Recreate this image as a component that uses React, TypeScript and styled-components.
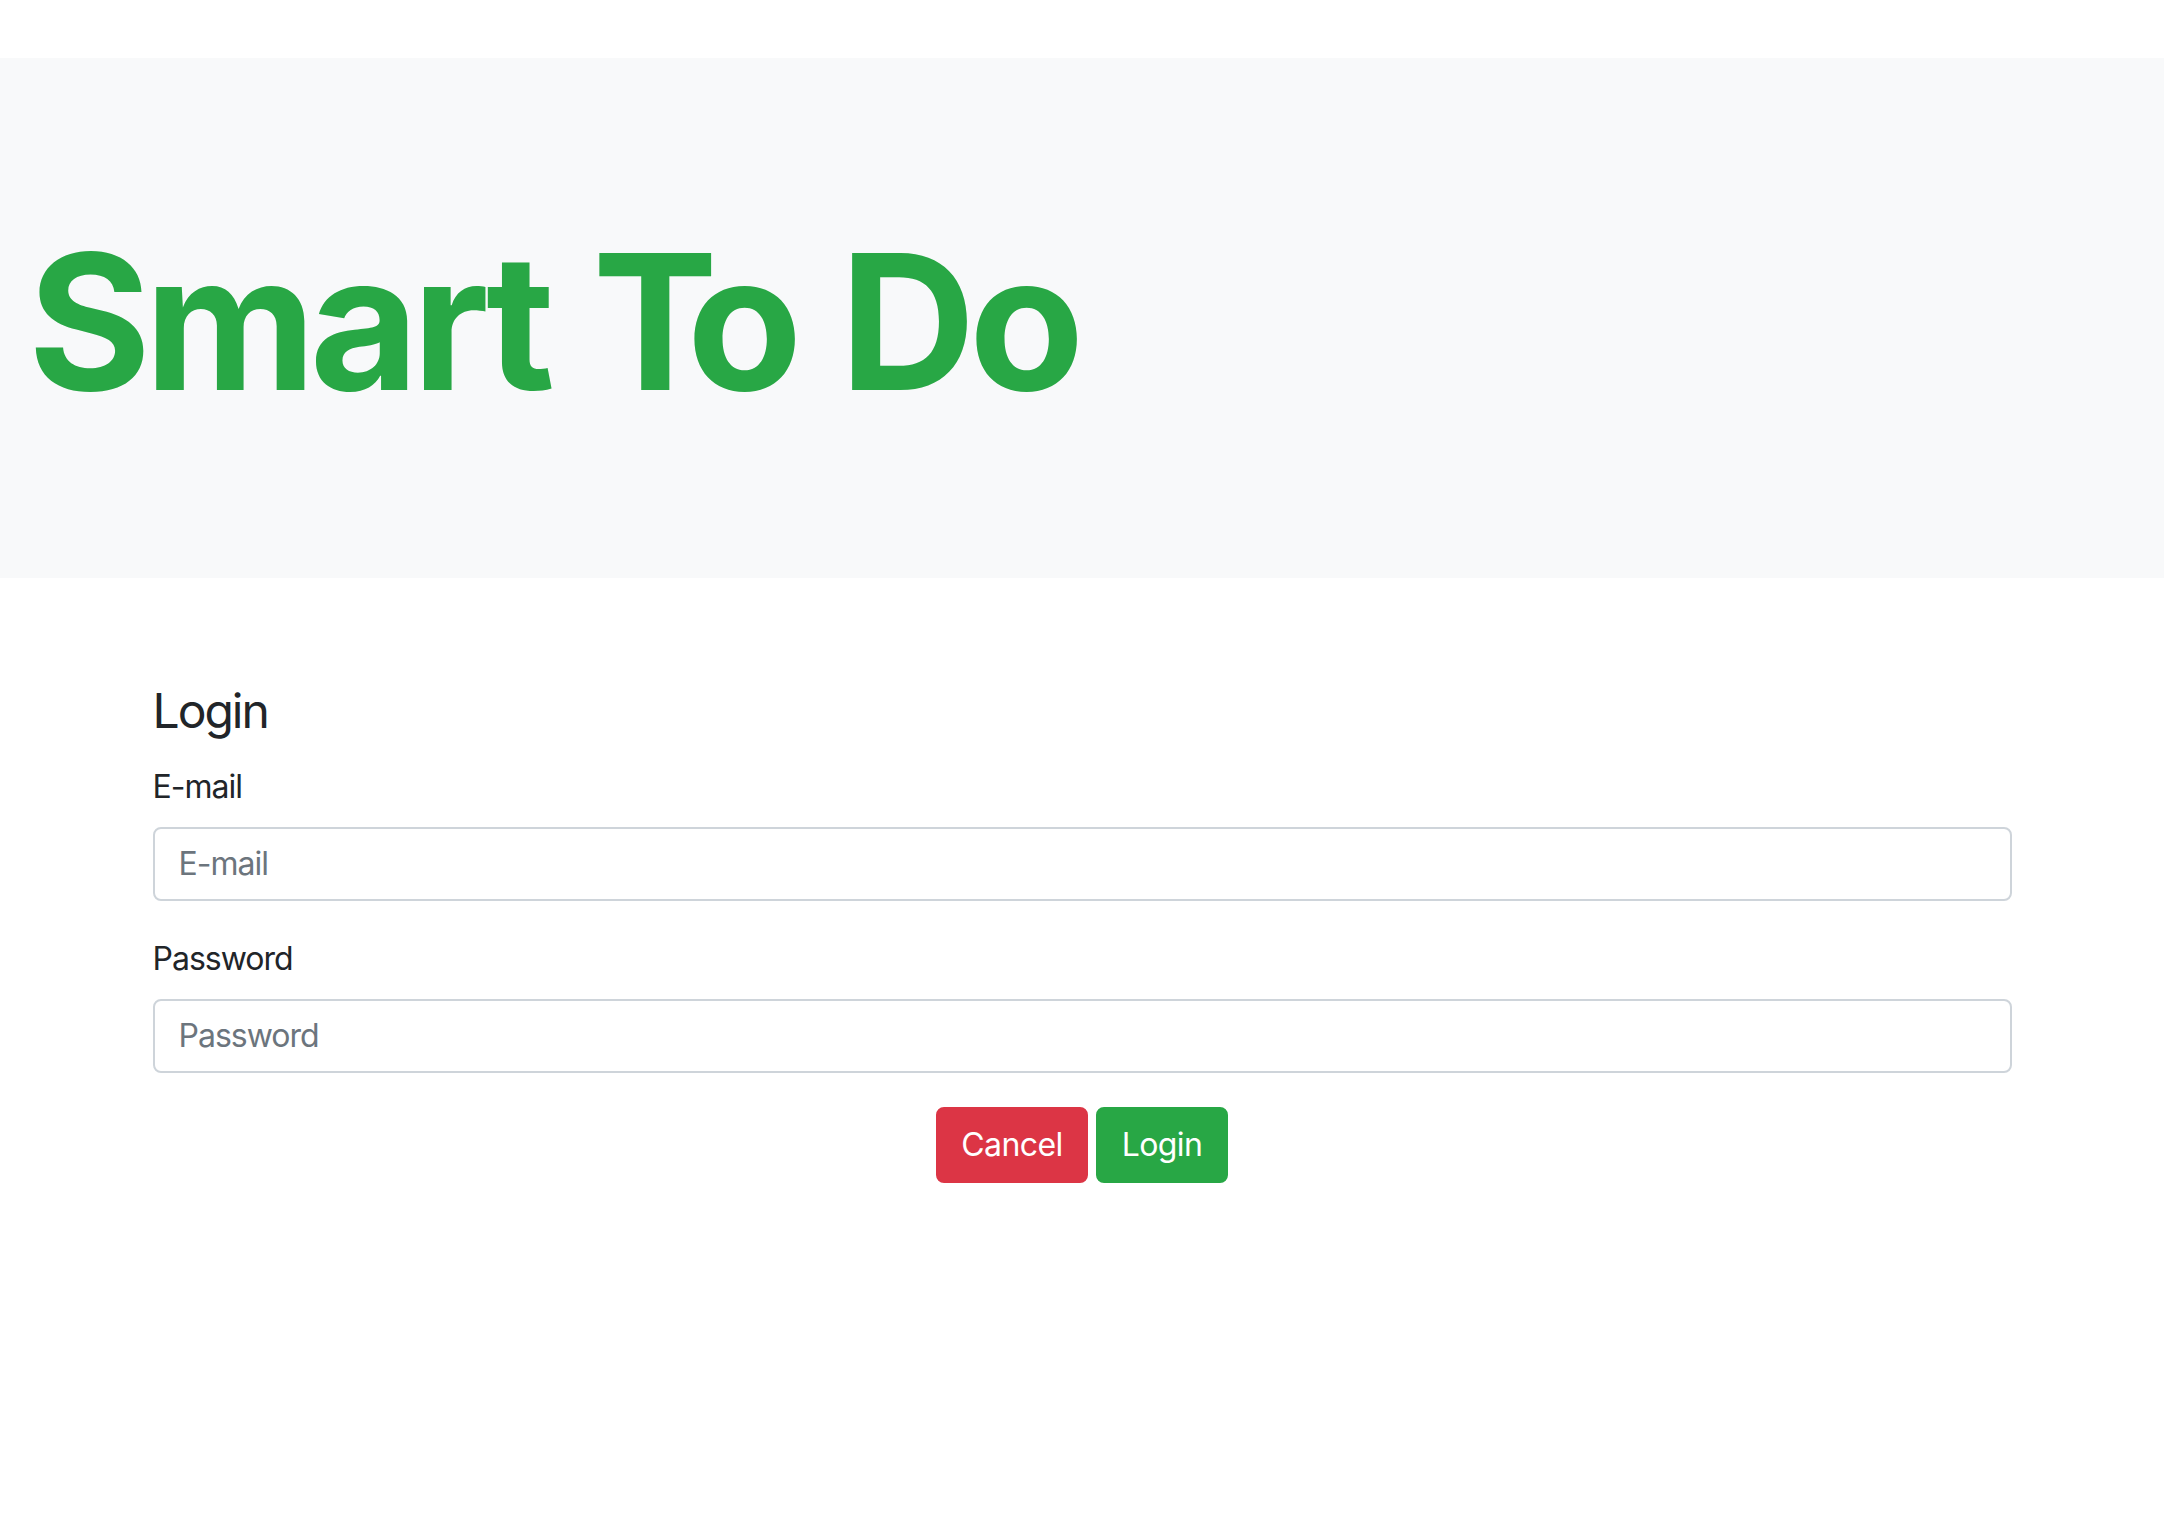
import React from "react";
import styled, { createGlobalStyle } from "styled-components";

const GlobalStyle = createGlobalStyle`
  * { box-sizing: border-box; }
  html, body { margin: 0; padding: 0; background: #ffffff; }
  body {
    font-family: Inter, "Noto Sans", "Liberation Sans", sans-serif;
    color: #212529;
  }
`;

const Page = styled.div`
  padding-top: 58px;
  min-height: 1526px;
  background: #ffffff;
`;

const Jumbotron = styled.header`
  background: #f8f9fa;
  padding: 164px 0 156px 28px;
`;

const Title = styled.h1`
  margin: 0;
  font-family: Inter, "Liberation Sans", sans-serif;
  font-weight: 700;
  font-size: 188px;
  line-height: 200px;
  letter-spacing: -6.5px;
  word-spacing: 6px;
  color: #28a745;
`;

const Kern = styled.span<{ $k: number }>`
  letter-spacing: ${(p) => p.$k}px;
`;

const Container = styled.main`
  width: 1859px;
  margin: 0 auto;
  padding-top: 104px;
`;

const Heading = styled.h4`
  margin: 0 0 23px;
  font-size: 48px;
  font-weight: 400;
  line-height: 57.6px;
  letter-spacing: -2px;
  color: #212529;
`;

const Group = styled.div`
  display: flex;
  flex-direction: column;
  margin-bottom: 34px;
`;

const Label = styled.label`
  font-size: 32px;
  line-height: 48px;
  margin-bottom: 16px;
  letter-spacing: -1px;
  color: #212529;
`;

const Input = styled.input`
  height: 74px;
  width: 100%;
  padding: 0 24px;
  font-family: inherit;
  font-size: 32px;
  line-height: 70px;
  letter-spacing: -1px;
  color: #495057;
  background: #ffffff;
  border: 2px solid #ced4da;
  border-radius: 8px;
  outline: none;
  &::placeholder {
    color: #6c757d;
    opacity: 1;
  }
`;

const Actions = styled.div`
  display: flex;
  justify-content: center;
  gap: 8px;
  margin-top: 0;
`;

const Button = styled.button<{ $variant: "danger" | "success"; $w: number }>`
  height: 76px;
  width: ${(p) => p.$w}px;
  padding: 0;
  font-family: inherit;
  font-size: 32px;
  line-height: 48px;
  letter-spacing: -0.6px;
  color: #ffffff;
  border: 2px solid ${(p) => (p.$variant === "danger" ? "#dc3545" : "#28a745")};
  background: ${(p) => (p.$variant === "danger" ? "#dc3545" : "#28a745")};
  border-radius: 8px;
  cursor: pointer;
`;

export default function App() {
  return (
    <>
      <GlobalStyle />
      <Page>
        <Jumbotron>
          <Title>
            Smart <Kern $k={-31}>T</Kern>o Do
          </Title>
        </Jumbotron>
        <Container>
          <Heading>Login</Heading>
          <Group>
            <Label htmlFor="email">E-mail</Label>
            <Input id="email" type="email" placeholder="E-mail" />
          </Group>
          <Group>
            <Label htmlFor="password">Password</Label>
            <Input id="password" type="password" placeholder="Password" />
          </Group>
          <Actions>
            <Button type="button" $variant="danger" $w={152}>
              Cancel
            </Button>
            <Button type="submit" $variant="success" $w={132}>
              Login
            </Button>
          </Actions>
        </Container>
      </Page>
    </>
  );
}
